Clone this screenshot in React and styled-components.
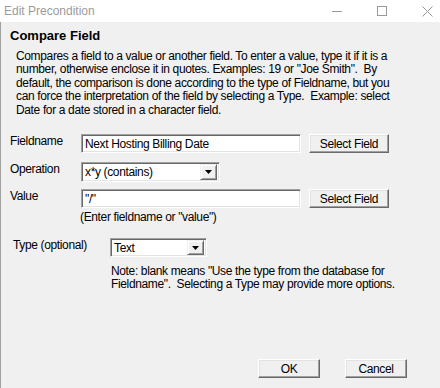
import React from "react";
import styled, { createGlobalStyle } from "styled-components";

const GlobalStyle = createGlobalStyle`
  html, body {
    margin: 0;
    padding: 0;
    background: #f0f0f0;
  }
  body {
    font-family: "Liberation Sans", Arial, sans-serif;
    font-size: 12px;
    letter-spacing: -0.36px;
    color: #000;
  }
`;

const Window = styled.div`
  width: 440px;
  height: 388px;
  display: flex;
  flex-direction: column;
  background: #f0f0f0;
  overflow: hidden;
`;

const TitleBar = styled.div`
  height: 22px;
  flex-shrink: 0;
  background: #fff;
  display: flex;
  align-items: center;
  padding-left: 4px;
`;

const Title = styled.div`
  flex: 1;
  color: #9b9b9b;
  font-size: 12px;
  letter-spacing: 0;
`;

const Controls = styled.div`
  display: flex;
  align-items: center;
  gap: 35px;
  padding-right: 7px;
`;

const Body = styled.div`
  flex: 1;
  display: flex;
  flex-direction: column;
  border-left: 1px solid #a0a0a0;
  padding: 0 0 10px 9px;
`;

const Heading = styled.div`
  margin-top: 6px;
  font-size: 13px;
  font-weight: bold;
  letter-spacing: 0;
  line-height: 16px;
`;

const Description = styled.div`
  margin: 6px 0 0 6px;
  line-height: 13.4px;
`;

const Row = styled.div`
  display: flex;
  align-items: flex-start;
  margin-top: ${(p) => p.$top || 0}px;
`;

const Label = styled.div`
  width: ${(p) => p.$width}px;
  line-height: 14px;
  flex-shrink: 0;
`;

const Sunken = styled.div`
  box-sizing: border-box;
  width: ${(p) => p.$width}px;
  height: ${(p) => p.$height || 19}px;
  background: #fff;
  border: 1px solid;
  border-color: #a0a0a0 #fff #fff #a0a0a0;
  box-shadow: inset 1px 1px #696969, inset -1px -1px #e3e3e3;
  display: flex;
  align-items: center;
  padding-left: 3px;
  line-height: 14px;
`;

const ComboText = styled.div`
  flex: 1;
`;

const ArrowButton = styled.div`
  box-sizing: border-box;
  width: 17px;
  height: ${(p) => p.$height}px;
  margin-right: 2px;
  background: #f0f0f0;
  border: 1px solid;
  border-color: #f0f0f0 #696969 #696969 #f0f0f0;
  box-shadow: inset 1px 1px #fff, inset -1px -1px #a0a0a0;
  display: flex;
  align-items: center;
  justify-content: center;
`;

const Button = styled.div`
  box-sizing: border-box;
  width: ${(p) => p.$width}px;
  height: 19px;
  margin-left: ${(p) => p.$gap || 0}px;
  background: #f0f0f0;
  border: 1px solid;
  border-color: #fff #696969 #696969 #fff;
  box-shadow: inset -1px -1px #a0a0a0, inset 1px 1px #e3e3e3;
  display: flex;
  align-items: center;
  justify-content: center;
  line-height: 14px;
`;

const Hint = styled.div`
  margin: 3px 0 0 70px;
  line-height: 13px;
`;

const Note = styled.div`
  margin: 8px 0 0 101px;
  line-height: 13.4px;
`;

const Footer = styled.div`
  margin-top: auto;
  display: flex;
  padding-left: 248px;
`;

const DropArrow = () => (
  <svg width="7" height="4" viewBox="0 0 7 4">
    <path d="M0 0h7L3.5 4z" fill="#000" />
  </svg>
);

const Combo = ({ width, height, value }) => (
  <Sunken $width={width} $height={height}>
    <ComboText>{value}</ComboText>
    <ArrowButton $height={height - 4}>
      <DropArrow />
    </ArrowButton>
  </Sunken>
);

const App = () => {
  return (
    <>
      <GlobalStyle />
      <Window>
        <TitleBar>
          <Title>Edit Precondition</Title>
          <Controls>
            <svg width="10" height="10" viewBox="0 0 10 10">
              <path d="M0 5.5h10" stroke="#999" strokeWidth="1" />
            </svg>
            <svg width="10" height="10" viewBox="0 0 10 10">
              <rect x="0.5" y="0.5" width="9" height="9" fill="none" stroke="#999" />
            </svg>
            <svg width="11" height="11" viewBox="0 0 11 11">
              <path d="M0.5 0.5l10 10M10.5 0.5l-10 10" stroke="#999" strokeWidth="1" />
            </svg>
          </Controls>
        </TitleBar>
        <Body>
          <Heading>Compare Field</Heading>
          <Description>
            Compares a field to a value or another field. To enter a value, type it if it is a
            <br />
            number, otherwise enclose it in quotes. Examples: 19 or "Joe Smith".&nbsp; By
            <br />
            default, the comparison is done according to the type of Fieldname, but you
            <br />
            can force the interpretation of the field by selecting a Type.&nbsp; Example: select
            <br />
            Date for a date stored in a character field.
          </Description>

          <Row $top={17}>
            <Label $width={71}>Fieldname</Label>
            <Sunken $width={220}>Next Hosting Billing Date</Sunken>
            <Button $width={80} $gap={8}>Select Field</Button>
          </Row>
          <Row $top={9}>
            <Label $width={71}>Operation</Label>
            <Combo width={139} height={20} value="x*y (contains)" />
          </Row>
          <Row $top={7}>
            <Label $width={71}>Value</Label>
            <Sunken $width={220}>"/"</Sunken>
            <Button $width={80} $gap={8}>Select Field</Button>
          </Row>
          <Hint>(Enter fieldname or "value")</Hint>

          <Row $top={14}>
            <Label $width={100}>&nbsp;Type (optional)</Label>
            <Combo width={97} height={19} value="Text" />
          </Row>
          <Note>
            Note: blank means "Use the type from the database for
            <br />
            Fieldname".&nbsp; Selecting a Type may provide more options.
          </Note>

          <Footer>
            <Button $width={62}>OK</Button>
            <Button $width={62} $gap={25}>Cancel</Button>
          </Footer>
        </Body>
      </Window>
    </>
  );
};

export default App;
